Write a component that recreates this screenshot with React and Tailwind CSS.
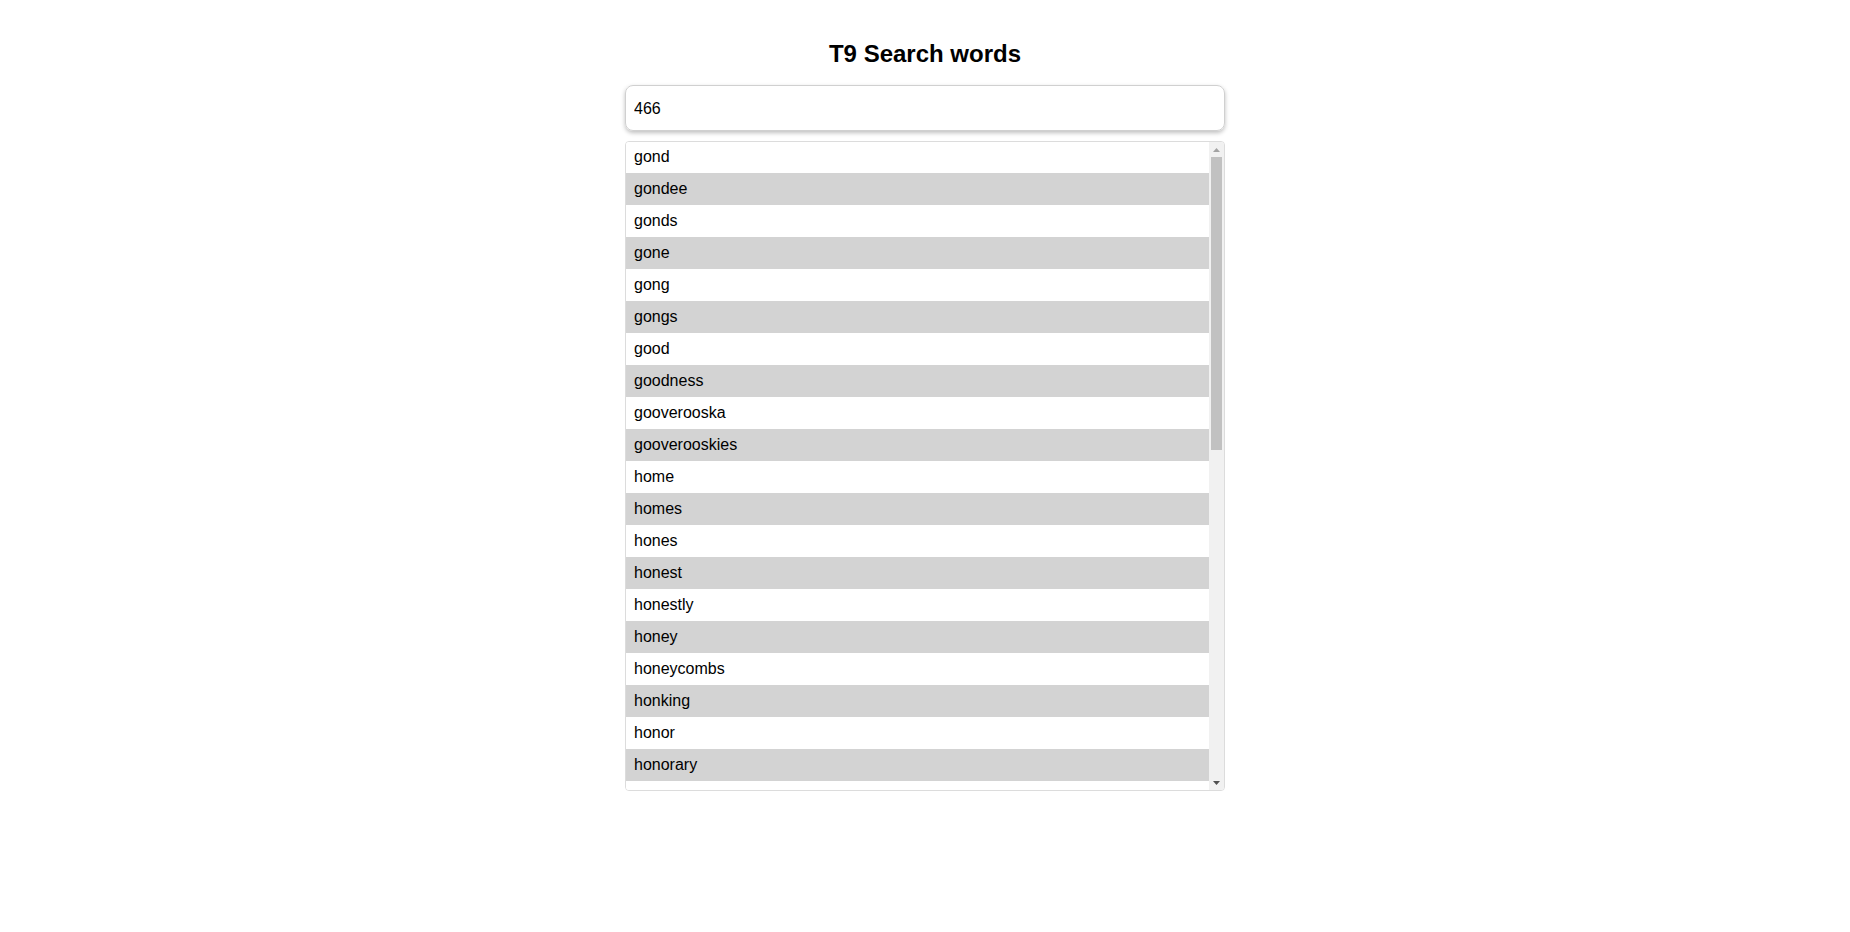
import React, { useState } from "react";

const WORDS = [
  "gond", "gondee", "gonds", "gone", "gong", "gongs", "good", "goodness",
  "gooverooska", "gooverooskies", "home", "homes", "hones", "honest",
  "honestly", "honey", "honeycombs", "honking", "honor", "honorary",
  "honors", "honour", "honours", "hood", "hoods", "hook", "hooks", "hoon",
  "hoop", "hoops", "hoot", "hooted", "hoots", "inn", "inner", "innings",
  "inns", "inmost", "innocence", "innocent", "innovate", "innuendo", "imod",
];

export default function App() {
  const [value, setValue] = useState("466");
  return (
    <div className="min-h-screen bg-white" style={{ fontFamily: '"Liberation Sans", Arial, sans-serif' }}>
      <div className="w-[600px] mx-auto pt-[40px] flex flex-col">
        <h1 className="text-[24px] leading-[28px] font-bold text-center text-black">T9 Search words</h1>
        <input
          value={value}
          onChange={(e) => setValue(e.target.value)}
          className="mt-[17px] h-[46px] w-full rounded-lg border border-[#d0d0d0] px-2 pt-[2px] text-base text-black outline-none shadow-[0_2px_4px_rgba(0,0,0,0.25)]"
        />
        <div className="mt-[10px] h-[650px] flex rounded border border-[#dcdcdc] overflow-hidden">
          <div className="flex-1 overflow-hidden">
            <ul className="-mt-[1px]">
              {WORDS.map((w, i) => (
                <li
                  key={w}
                  className={`h-8 px-2 leading-8 text-base text-black ${i % 2 === 1 ? "bg-[#d3d3d3]" : "bg-white"}`}
                >
                  {w}
                </li>
              ))}
            </ul>
          </div>
          <div className="w-[15px] shrink-0 bg-[#f1f1f1] flex flex-col items-center">
            <div className="h-[15px] w-full flex items-center justify-center">
              <svg width="7" height="4" viewBox="0 0 7 4"><path d="M3.5 0 L7 4 L0 4 Z" fill="#a3a3a3" /></svg>
            </div>
            <div className="w-[11px] h-[293px] bg-[#c1c1c1]" />
            <div className="flex-1" />
            <div className="h-[15px] w-full flex items-center justify-center">
              <svg width="7" height="4" viewBox="0 0 7 4"><path d="M0 0 L7 0 L3.5 4 Z" fill="#505050" /></svg>
            </div>
          </div>
        </div>
      </div>
    </div>
  );
}
